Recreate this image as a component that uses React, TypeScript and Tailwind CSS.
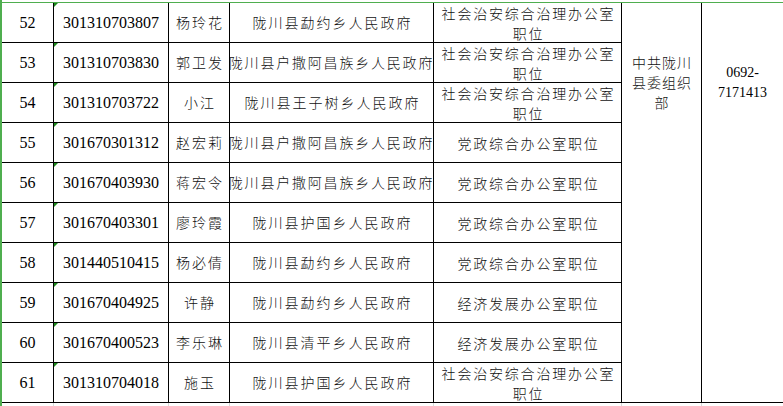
import React from 'react';

type Row = {
  no: number;
  code: string;
  name: string;
  gov: string;
  pos: string[];
};

const ZHIAN = ['社会治安综合治理办公室', '职位'];
const DANGZHENG = ['党政综合办公室职位'];
const JINGJI = ['经济发展办公室职位'];

const rows: Row[] = [
  { no: 52, code: '301310703807', name: '杨玲花', gov: '陇川县勐约乡人民政府', pos: ZHIAN },
  { no: 53, code: '301310703830', name: '郭卫发', gov: '陇川县户撒阿昌族乡人民政府', pos: ZHIAN },
  { no: 54, code: '301310703722', name: '小江', gov: '陇川县王子树乡人民政府', pos: ZHIAN },
  { no: 55, code: '301670301312', name: '赵宏莉', gov: '陇川县户撒阿昌族乡人民政府', pos: DANGZHENG },
  { no: 56, code: '301670403930', name: '蒋宏令', gov: '陇川县户撒阿昌族乡人民政府', pos: DANGZHENG },
  { no: 57, code: '301670403301', name: '廖玲霞', gov: '陇川县护国乡人民政府', pos: DANGZHENG },
  { no: 58, code: '301440510415', name: '杨必倩', gov: '陇川县勐约乡人民政府', pos: DANGZHENG },
  { no: 59, code: '301670404925', name: '许静', gov: '陇川县勐约乡人民政府', pos: JINGJI },
  { no: 60, code: '301670400523', name: '李乐琳', gov: '陇川县清平乡人民政府', pos: JINGJI },
  { no: 61, code: '301310704018', name: '施玉', gov: '陇川县护国乡人民政府', pos: ZHIAN },
];

const cell = 'flex items-center justify-center overflow-hidden whitespace-nowrap border-r border-b border-black';
const serif = "font-['Liberation_Serif',serif] text-[16px] text-black";
const cjk = "font-['Noto_Sans_CJK_SC',sans-serif] font-light text-[14px] text-[#111]";

const App: React.FC = () => {
  return (
    <div className="flex w-[783px] h-[406px] bg-white overflow-hidden">
      {/* excel selection frame on the left */}
      <div className="w-[2px] h-full bg-[#4fae4f] shrink-0" />
      <div className="flex flex-col w-[781px]">
        <div className="h-[2px] bg-white" />
        <div className="h-px bg-[#4fae4f] -ml-[2px] w-[783px]" />

        <div className="grid grid-cols-[52px_115px_61px_204px_188px_80px_81px] grid-rows-[repeat(10,40px)]">
          <div className={`${cjk} col-start-6 row-start-1 row-span-10 border-r border-b border-black flex flex-col items-center pt-[49px] leading-[20px] tracking-[1px] pl-[1px]`}>
            <span>中共陇川</span>
            <span>县委组织</span>
            <span>部</span>
          </div>
          <div className={`font-['Liberation_Serif',serif] text-[14px] text-black col-start-7 row-start-1 row-span-10 border-b border-black flex flex-col items-center pt-[60px] leading-[20px]`}>
            <span>0692-</span>
            <span>7171413</span>
          </div>

          {rows.map((r) => {
            const longGov = r.gov.length > 11;
            return (
              <React.Fragment key={r.no}>
                <div className={`${cell} ${serif}`}>{r.no}</div>
                <div className={`${cell} ${serif} relative`}>
                  <span className="absolute top-0 left-0 w-0 h-0 border-t-[4px] border-r-[4px] border-t-[#1e8a1e] border-r-transparent" />
                  {r.code}
                </div>
                <div className={`${cell} ${cjk} tracking-[2px] pl-[2px]`}>{r.name}</div>
                <div className={`${cell} ${cjk} ${longGov ? 'tracking-[1.8px]' : 'tracking-[2px] pl-[2px]'}`}>{r.gov}</div>
                <div className={`${cell} ${cjk} flex-col leading-[20px] tracking-[1.8px] pl-[2px]`}>
                  {r.pos.map((p) => (
                    <span key={p}>{p}</span>
                  ))}
                </div>
              </React.Fragment>
            );
          })}
        </div>

        {/* faint gridlines below the table */}
        <div className="grid grid-cols-[52px_115px_61px_204px_188px_80px_81px] h-[3px]">
          <div className="border-r border-[#d9d9d9]" />
          <div className="border-r border-[#d9d9d9]" />
          <div className="border-r border-[#d9d9d9]" />
          <div className="border-r border-[#d9d9d9]" />
          <div className="border-r border-[#d9d9d9]" />
          <div className="border-r border-[#d9d9d9]" />
          <div />
        </div>
      </div>
    </div>
  );
};

export default App;
